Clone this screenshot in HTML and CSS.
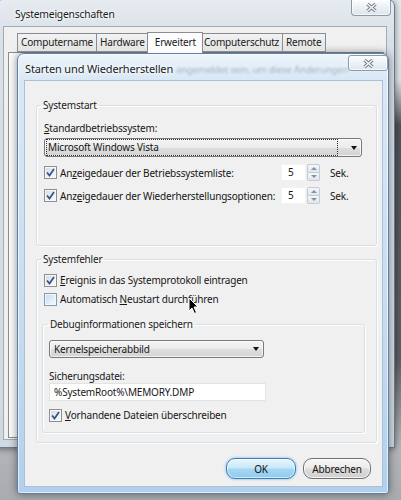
FILE: index.html
```html
<!DOCTYPE html>
<html lang="de">
<head>
<meta charset="utf-8">
<title>Starten und Wiederherstellen</title>
<link rel="stylesheet" href="styles.css">
</head>
<body>
<div class="desktop">
  <div class="win outer">
    <div class="titlebar">
      <span class="title">Systemeigenschaften</span>
      <span class="close close-outer">
        <svg width="13" height="11" viewBox="0 0 13 11"><path d="M2.5 2 L10.5 9 M10.5 2 L2.5 9" stroke="#707b86" stroke-width="3.4" fill="none"/><path d="M2.5 2 L10.5 9 M10.5 2 L2.5 9" stroke="#f4f6f8" stroke-width="1.6" fill="none"/></svg>
      </span>
    </div>
    <div class="client outer-client">
      <div class="tabs">
        <span class="tab">Computername</span>
        <span class="tab">Hardware</span>
        <span class="tab active">Erweitert</span>
        <span class="tab">Computerschutz</span>
        <span class="tab">Remote</span>
      </div>
      <div class="tabpage"></div>
    </div>
  </div>

  <div class="win dialog">
    <div class="titlebar dlg-titlebar">
      <span class="title">Starten und Wiederherstellen</span>
      <span class="ghost">angemeldet sein, um diese Änderungen</span>
      <span class="close close-dlg">
        <svg width="13" height="11" viewBox="0 0 13 11"><path d="M2.5 2 L10.5 9 M10.5 2 L2.5 9" stroke="#707b86" stroke-width="3.4" fill="none"/><path d="M2.5 2 L10.5 9 M10.5 2 L2.5 9" stroke="#f4f6f8" stroke-width="1.6" fill="none"/></svg>
      </span>
    </div>
    <div class="client dlg-client">
      <fieldset class="group g-start">
        <legend>Systemstart</legend>
        <div class="field-label"><u>S</u>tandardbetriebssystem:</div>
        <div class="combo combo-wide">
          <span class="combo-text focus">Microsoft Windows Vista</span>
          <span class="arrow"></span>
        </div>
        <div class="row spin-row first">
          <span class="check-label"><span class="cb checked"><svg width="11" height="11" viewBox="0 0 11 11"><path d="M2 5.5 L4.5 8.5 L9 2" stroke="#34508e" stroke-width="1.7" fill="none"/></svg></span><span class="lbl">An<u>z</u>eigedauer der Betriebssystemliste:</span></span>
          <span class="spin"><span class="spin-box">5</span><span class="spin-btns"><span class="sb up"></span><span class="sb down"></span></span></span>
          <span class="unit">Sek.</span>
        </div>
        <div class="row spin-row second">
          <span class="check-label"><span class="cb checked"><svg width="11" height="11" viewBox="0 0 11 11"><path d="M2 5.5 L4.5 8.5 L9 2" stroke="#34508e" stroke-width="1.7" fill="none"/></svg></span><span class="lbl">Anz<u>e</u>igedauer der Wiederherstellungsoptionen:</span></span>
          <span class="spin"><span class="spin-box">5</span><span class="spin-btns"><span class="sb up"></span><span class="sb down"></span></span></span>
          <span class="unit">Sek.</span>
        </div>
      </fieldset>

      <fieldset class="group g-error">
        <legend>Systemfehler</legend>
        <div class="row check-row r1">
          <span class="check-label"><span class="cb checked"><svg width="11" height="11" viewBox="0 0 11 11"><path d="M2 5.5 L4.5 8.5 L9 2" stroke="#34508e" stroke-width="1.7" fill="none"/></svg></span><span class="lbl"><u>E</u>reignis in das Systemprotokoll eintragen</span></span>
        </div>
        <div class="row check-row r2">
          <span class="check-label"><span class="cb hover"></span><span class="lbl">Automatisch <u>N</u>eustart durchführen</span></span>
        </div>
        <fieldset class="group g-debug">
          <legend>Debuginformationen speichern</legend>
          <div class="combo combo-debug">
            <span class="combo-text">Kernelspeicherabbild</span>
            <span class="arrow"></span>
          </div>
          <div class="field-label small-label">Sicherungsdatei:</div>
          <div class="textbox">%SystemRoot%\MEMORY.DMP</div>
          <div class="row check-row r3">
            <span class="check-label"><span class="cb checked"><svg width="11" height="11" viewBox="0 0 11 11"><path d="M2 5.5 L4.5 8.5 L9 2" stroke="#34508e" stroke-width="1.7" fill="none"/></svg></span><span class="lbl"><u>V</u>orhandene Dateien überschreiben</span></span>
          </div>
        </fieldset>
      </fieldset>

      <div class="buttons">
        <span class="btn btn-default">OK</span>
        <span class="btn">Abbrechen</span>
      </div>
    </div>
  </div>

  <svg class="cursor" width="12" height="18" viewBox="0 0 12 18"><path d="M1 1 L1 14 L4 11 L6.5 16.5 L8.5 15.5 L6 10 L10 10 Z" fill="#000" stroke="#fff" stroke-width="1"/></svg>
</div>
</body>
</html>
```

FILE: styles.css
```css
* { box-sizing: border-box; }
html, body { margin: 0; padding: 0; }
body {
  width: 401px;
  height: 500px;
  overflow: hidden;
  font-family: "Noto Sans", "Open Sans", "DejaVu Sans", sans-serif;
  font-size: 10px;
  letter-spacing: -0.18px;
  color: #161616;
  background: linear-gradient(180deg, #e3e8ed 0, #dde3e8 80px, #4f5358 125px, #5b5f63 360px, #b3b5b8 445px, #a9abae 500px);
}
.desktop { position: relative; width: 401px; height: 500px; }

/* windows */
.win { position: absolute; display: flex; flex-direction: column; }
.titlebar { display: flex; align-items: flex-start; height: 26px; flex: none; }
.title {
  margin-top: 7px;
  font-size: 11px;
  letter-spacing: -0.15px;
  line-height: 14px;
  color: #1b1b1b;
  text-shadow: 0 0 5px #fff, 0 0 3px #fff;
  white-space: nowrap;
}
.close {
  display: flex;
  align-items: center;
  justify-content: center;
  margin-left: auto;
  width: 40px;
  height: 16px;
  flex: none;
  border: 1px solid #8d9aa8;
  background: linear-gradient(180deg, rgba(255,255,255,0.85), rgba(220,228,236,0.8));
  box-shadow: inset 0 0 0 1px rgba(255,255,255,0.7);
}

/* outer window */
.outer {
  left: -5px;
  top: -1px;
  width: 400px;
  height: 449px;
  border: 1px solid #6d7a88;
  border-radius: 7px 7px 0 0;
  padding: 0 7px 7px 7px;
  background: linear-gradient(180deg, #e6ebf0 0, #d9e0e7 40px, #d0d9e2 100%);
  box-shadow: 0 1px 6px rgba(0,0,0,0.45);
}
.outer .title { padding-left: 12px; font-size: 10.3px; letter-spacing: -0.2px; }
.close-outer {
  margin-right: -4px;
  border-top: none;
  border-radius: 0 0 4px 4px;
}
.client { flex: 1; display: flex; flex-direction: column; }
.outer-client {
  background: #f0f0f0;
  border: 1px solid #a3acb5;
  padding: 4px 2px 1px 4px;
}
.tabs { display: flex; align-items: flex-end; padding-left: 9px; height: 21px; flex: none; position: relative; z-index: 1; }
.tab {
  height: 19px;
  padding: 0 3px;
  line-height: 17px;
  border: 1px solid #898c95;
  border-right: none;
  background: linear-gradient(180deg, #f2f2f2, #e3e3e3);
  white-space: nowrap;
  color: #1a1a1a;
}
.tab:nth-child(5) { border-right: 1px solid #898c95; }
.tab.active {
  height: 21px;
  margin: 0 -2px -1px -1px;
  padding: 0 6px 0 7px;
  line-height: 18px;
  background: #fcfcfc;
  border-right: 1px solid #898c95;
  border-bottom: none;
  position: relative;
}
.tab.active + .tab { border-left: none; }
.tabpage { flex: 1; background: #fbfbfb; border: 1px solid #898c95; }

/* dialog */
.dialog {
  left: 17px;
  top: 53px;
  width: 372px;
  height: 441px;
  border: 1px solid #5d81a9;
  border-radius: 7px 7px 3px 3px;
  padding: 0 5px 6px 6px;
  background: linear-gradient(180deg, #edf4fb 0, #d9e8f6 26px, #c6dcf1 60%, #b2d0ec 100%);
  box-shadow: 0 0 8px rgba(0,0,0,0.45), inset 0 0 0 1px rgba(255,255,255,0.6);
}
.dlg-titlebar .title { padding-left: 1px; margin-top: 8px; }
.ghost {
  margin: 9px 0 0 3px;
  font-size: 9.5px;
  line-height: 13px;
  color: rgba(70,80,95,0.38);
  filter: blur(0.9px);
  white-space: nowrap;
}
.close-dlg {
  margin-top: 1px;
  border-radius: 3px;
}
.dlg-client {
  background: #f0f0f0;
  border: 1px solid #a9c0d8;
  padding: 17px 5px 0 11px;
}

/* group boxes */
.group {
  margin: 0;
  min-width: 0;
  border: 1px solid #d5dfe5;
  border-radius: 3px;
  box-shadow: 1px 1px 0 #fff, inset 1px 1px 0 #fff;
}
.group legend {
  padding: 0 2px;
  margin-left: -3px;
  line-height: 14px;
  color: #1a1a1a;
}
.g-start { padding: 0 14px 41px 7px; }
.g-error { margin-top: 6px; padding: 0 11px 9px 7px; }
.g-debug { margin: 10px 0 0 -2px; padding: 0 8px 9px 6px; }
.g-debug legend { margin-left: -1px; }

.field-label { margin-top: 9px; line-height: 14px; white-space: nowrap; }
.small-label { margin-top: 12px; line-height: 13px; }

/* combo boxes */
.combo {
  display: flex;
  align-items: center;
  border: 1px solid #7a7a7a;
  border-radius: 3px;
  background: linear-gradient(180deg, #f4f4f4 0, #ececec 50%, #dedede 51%, #d3d3d3 100%);
  box-shadow: inset 0 0 0 1px rgba(255,255,255,0.7);
}
.combo-wide { margin-top: 3px; height: 19px; padding: 0 0 0 2px; }
.combo-debug { margin-top: 9px; height: 18px; width: 215px; padding: 0 0 0 3px; }
.combo-text { flex: 1; line-height: 13px; white-space: nowrap; padding-left: 1px; }
.combo-text.focus { outline: 1px dotted #333; outline-offset: 0; margin-right: 14px; padding: 1px; }
.arrow {
  width: 0; height: 0;
  margin-right: 4px;
  border-left: 3.5px solid transparent;
  border-right: 3.5px solid transparent;
  border-top: 4px solid #111;
}

/* rows & checkboxes */
.row { display: flex; align-items: center; white-space: nowrap; }
.check-label { display: flex; align-items: center; }
.cb {
  width: 13px; height: 13px;
  margin-right: 3px;
  flex: none;
  display: flex; align-items: center; justify-content: center;
  border: 1px solid #8e8f8f;
  background: linear-gradient(135deg, #d3d7dd 0, #eef0f2 60%, #fbfbfb 100%);
  box-shadow: inset 0 0 0 1px #f7f7f7;
}
.cb.hover {
  border-color: #7f9db9;
  background: linear-gradient(135deg, #c5d8ec 0, #e3eef8 60%, #f7fbff 100%);
}
.spin-row { display: grid; grid-template-columns: 237px 39px auto; height: 17px; }
.spin-row.first { margin-top: 7px; }
.spin-row.second { margin-top: 6px; }
.spin { display: flex; height: 17px; }
.spin-box {
  width: 25px;
  background: #fff;
  border: 1px solid #f2f2f2;
  padding-left: 6px;
  line-height: 15px;
}
.spin-btns { display: flex; flex-direction: column; width: 13px; margin-left: 1px; }
.sb {
  flex: 1;
  display: flex; align-items: center; justify-content: center;
  border: 1px solid #c4ccd6;
  background: linear-gradient(180deg, #f5f7f9, #e1e6ec);
}
.sb.up { border-radius: 2px 2px 0 0; }
.sb.down { border-top: none; border-radius: 0 0 2px 2px; }
.sb.up::after { content: ""; border-left: 3px solid transparent; border-right: 3px solid transparent; border-bottom: 3px solid #8593a4; }
.sb.down::after { content: ""; border-left: 3px solid transparent; border-right: 3px solid transparent; border-top: 3px solid #8593a4; }
.unit { padding-left: 10px; }

.check-row { height: 16px; }
.check-row.r1 { margin-top: 6px; }
.check-row.r2 { margin-top: 3px; }
.check-row.r3 { margin-top: 6px; }

.textbox {
  width: 217px;
  height: 18px;
  background: #fff;
  border: 1px solid #e2e3e5;
  padding-left: 4px;
  line-height: 16px;
  white-space: nowrap;
}

/* buttons */
.buttons { display: flex; justify-content: flex-end; gap: 7px; margin: 15px 6px 0 0; }
.btn {
  width: 68px;
  height: 21px;
  display: flex; align-items: center; justify-content: center;
  border: 1px solid #707070;
  border-radius: 9px;
  background: linear-gradient(180deg, #f6f6f6 0, #ebebeb 48%, #dcdcdc 52%, #d0d0d0 100%);
  box-shadow: inset 0 0 0 1px rgba(255,255,255,0.75);
  color: #111;
}
.btn-default {
  width: 70px;
  border-color: #3c7fb1;
  background: linear-gradient(180deg, #e8f5fc 0, #c9e7f8 48%, #a6d8f3 52%, #8fcbee 100%);
  box-shadow: 0 0 3px #6fb3e6, inset 0 0 0 1px rgba(255,255,255,0.6);
}

.cursor { position: absolute; left: 188px; top: 297px; }
```
